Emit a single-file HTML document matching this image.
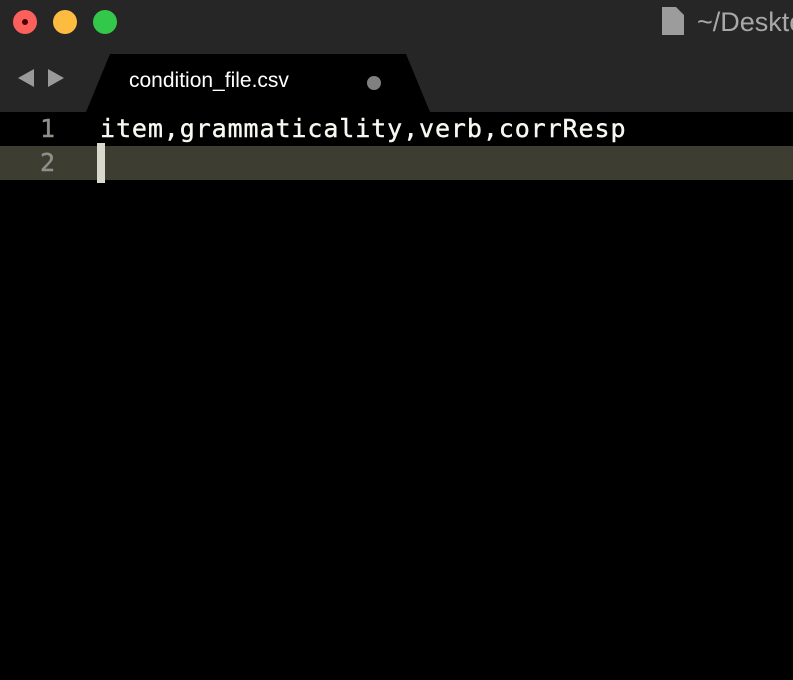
<!DOCTYPE html>
<html><head><style>
html,body{margin:0;padding:0;width:793px;height:680px;overflow:hidden;background:#000;}
.title{position:absolute;left:0;top:0;width:793px;height:112px;background:#262626;}
.dot{position:absolute;top:10px;width:24px;height:24px;border-radius:50%;}
.tab{position:absolute;left:86px;top:54px;width:344px;height:58px;background:#000;clip-path:polygon(24px 0,320px 0,344px 58px,0 58px);border-radius:6px 6px 0 0;}
.tabtxt{position:absolute;left:129px;top:69px;font:21px "Liberation Sans",sans-serif;color:#fff;}
.mono{font-family:"DejaVu Sans Mono","Liberation Mono",monospace;font-size:25px;letter-spacing:0.9px;-webkit-text-stroke:0.4px currentColor;}
</style></head><body>
<div class="title"></div>
<div class="dot" style="left:13px;background:#fc605c;"><div style="position:absolute;left:9px;top:9px;width:6px;height:6px;border-radius:50%;background:#4d0000"></div></div>
<div class="dot" style="left:53px;background:#fdbc40;"></div>
<div class="dot" style="left:93px;background:#34c84a;"></div>
<svg style="position:absolute;left:18px;top:68px" width="50" height="22"><polygon points="0,10 16,1 16,19" fill="#9a9a9a"/><polygon points="30,1 46,10 30,19" fill="#9a9a9a"/></svg>
<div class="tab"></div>
<div class="tabtxt">condition_file.csv</div>
<div style="position:absolute;left:367px;top:76px;width:14px;height:14px;border-radius:50%;background:#808080"></div>
<svg style="position:absolute;left:662px;top:7px" width="24" height="30"><polygon points="0,0 14,0 22,8 22,28 0,28" fill="#9c9c9c"/></svg>
<div style="position:absolute;left:697px;top:7px;font:27px 'Liberation Sans',sans-serif;color:#a8a8a8;white-space:nowrap">~/Desktop</div>
<div style="position:absolute;left:0;top:146px;width:793px;height:34px;background:#3e3d32"></div>
<div class="mono" style="position:absolute;left:40px;top:114px;color:#8f908a">1</div>
<div class="mono" style="position:absolute;left:40px;top:148px;color:#8f908a">2</div>
<div class="mono" style="position:absolute;left:100px;top:114px;color:#f8f8f2;white-space:nowrap">item,grammaticality,verb,corrResp</div>
<div style="position:absolute;left:97px;top:143px;width:8px;height:40px;background:#d8d8cc"></div>
</body></html>
